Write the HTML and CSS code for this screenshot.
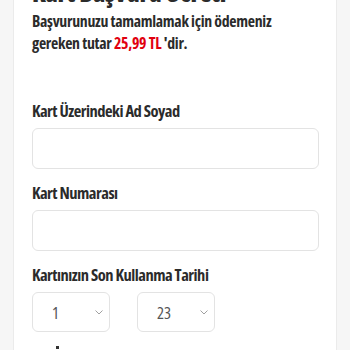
FILE: index.html
```html
<!DOCTYPE html>
<html lang="tr">
<head>
<meta charset="utf-8">
<link rel="stylesheet" href="styles.css">
</head>
<body>
<div class="card">
  <h1 class="title">Kart Başvuru Ücreti</h1>
  <p class="info">Başvurunuzu tamamlamak için ödemeniz gereken tutar <span class="price">25,99 TL</span> 'dir.</p>

  <div class="field first">
    <label class="label">Kart Üzerindeki Ad Soyad</label>
    <div class="input"></div>
  </div>

  <div class="field">
    <label class="label">Kart Numarası</label>
    <div class="input"></div>
  </div>

  <div class="field">
    <label class="label">Kartınızın Son Kullanma Tarihi</label>
    <div class="selects">
      <div class="select"><span class="value">1</span>
        <svg class="chev" width="8" height="5" viewBox="0 0 8 5"><path d="M0.5 0.5 L4 4 L7.5 0.5" fill="none" stroke="#a0a0a0" stroke-width="1"/></svg>
      </div>
      <div class="select"><span class="value">23</span>
        <svg class="chev" width="8" height="5" viewBox="0 0 8 5"><path d="M0.5 0.5 L4 4 L7.5 0.5" fill="none" stroke="#a0a0a0" stroke-width="1"/></svg>
      </div>
    </div>
  </div>
  <div class="mark"></div>
</div>
</body>
</html>
```
FILE: styles.css
```css
html, body {
  margin: 0;
  padding: 0;
  background: #f6f6f6;
  overflow: hidden;
}
.card {
  margin: -23px 13px 0 13px;
  background: #ffffff;
  border-left: 1px solid #ebebeb;
  border-right: 1px solid #ebebeb;
  padding: 0 17px 40px 18px;
  font-family: "Open Sans", "Roboto Condensed", sans-serif;
  font-stretch: 75%;
  color: #2b2b2b;
}
.title {
  margin: 0 0 3px 0;
  font-size: 25px;
  line-height: 30px;
  font-weight: 800;
  letter-spacing: -0.3px;
}
.info {
  margin: 0;
  font-size: 15.8px;
  line-height: 22px;
  font-weight: 700;
  letter-spacing: -0.3px;
  width: 262px;
}
.price {
  color: #e1000f;
}
.field {
  margin-top: 14px;
}
.field.first {
  margin-top: 47px;
}
.label {
  display: block;
  font-size: 16.5px;
  line-height: 20px;
  font-weight: 700;
  letter-spacing: -0.5px;
  margin-bottom: 7px;
}
.input {
  height: 39px;
  border: 1px solid #e3e3e3;
  border-radius: 6px;
  background: #fff;
}
.selects {
  display: flex;
  gap: 27px;
}
.select {
  box-sizing: content-box;
  width: 51px;
  height: 38px;
  border: 1px solid #e3e3e3;
  border-radius: 6px;
  display: flex;
  align-items: center;
  justify-content: space-between;
  padding: 0 6px 0 19px;
}
.value {
  font-size: 16.5px;
  font-weight: 400;
  color: #555;
}
.chev {
  display: block;
}
.mark {
  width: 3px;
  height: 3px;
  background: #333;
  margin: 14px 0 0 24px;
}
```
